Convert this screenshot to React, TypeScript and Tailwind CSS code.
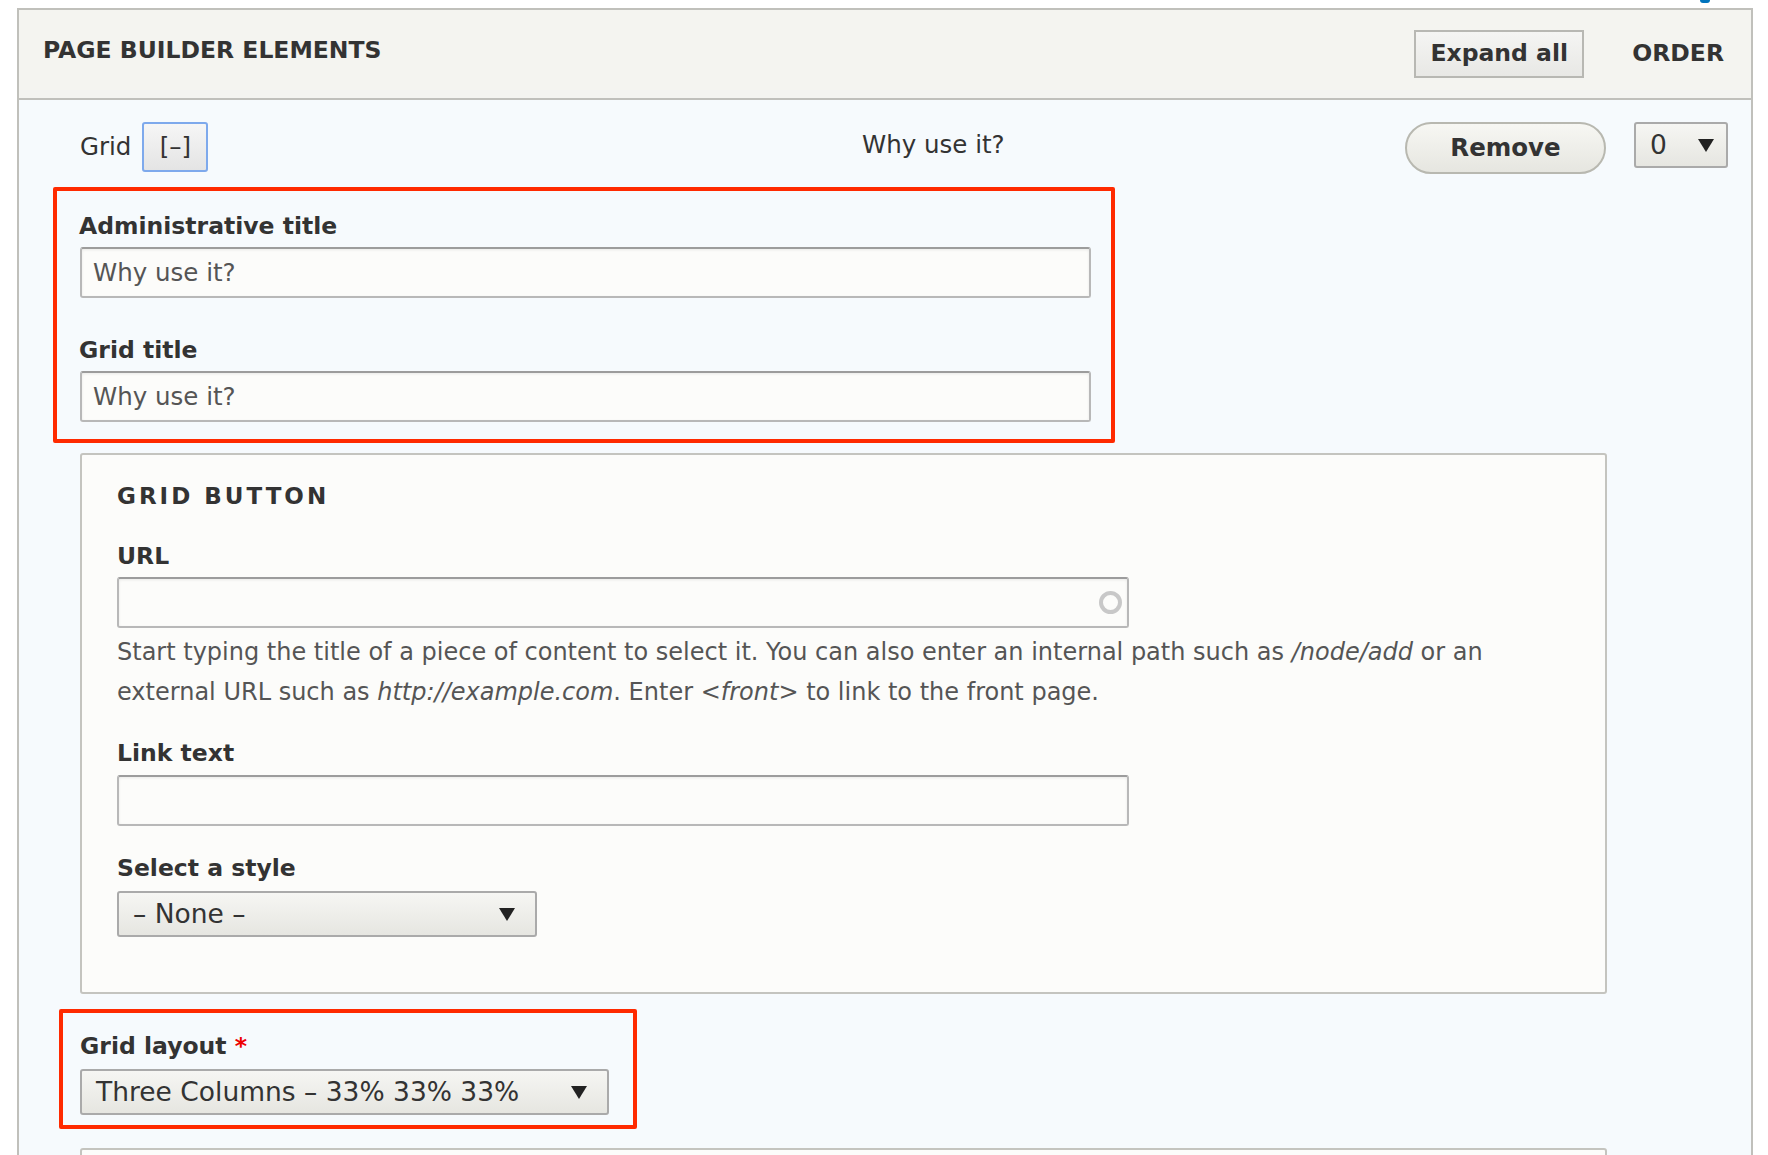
import React from "react";

const Arrow = ({ className = "" }: { className?: string }) => (
  <svg width="16" height="13" viewBox="0 0 16 13" className={className}>
    <path d="M0 0 L16 0 L8 13 Z" fill="#222" />
  </svg>
);

const TextInput = ({ value = "", width, throbber }: { value?: string; width: string; throbber?: boolean }) => (
  <div className={`relative h-[51px] ${width}`}>
    <input
      readOnly
      value={value}
      className="h-full w-full rounded-[3px] border-2 border-[#b8b8b8] border-t-[#9c9c9c] bg-[#fcfcfa] px-[11px] font-['DejaVu_Sans',sans-serif] text-[24.5px] text-[#555] shadow-[inset_0_1px_3px_rgba(0,0,0,0.08)] outline-none"
    />
    {throbber && (
      <div className="absolute right-[7px] top-[14px] h-[23px] w-[23px] rounded-full border-4 border-[#c8c8c8]" />
    )}
  </div>
);

const Select = ({ value, width }: { value: string; width: string }) => (
  <div
    className={`flex h-[46px] ${width} items-center justify-between rounded-[3px] border-2 border-[#aaa] bg-gradient-to-b from-[#f6f6f3] to-[#e6e6e1] pl-[14px] pr-[20px] text-[26.5px] text-[#333]`}
  >
    <span>{value}</span>
    <Arrow />
  </div>
);

const Label = ({ children, className = "" }: { children: React.ReactNode; className?: string }) => (
  <div className={`text-[23.5px] font-bold leading-[30px] text-[#333] ${className}`}>{children}</div>
);

export default function App() {
  return (
    <div className="h-[1155px] w-[1768px] overflow-hidden bg-white font-['DejaVu_Sans',sans-serif] text-[#333]">
      {/* bit of the link above the panel */}
      <div className="flex h-[8px] justify-end pr-[58px]">
        <div className="h-[3px] w-[10px] rounded-b-full bg-[#0074bd]" />
      </div>

      <div className="ml-[17px] w-[1736px] border-2 border-[#c0c0bb]">
        {/* header */}
        <div className="flex h-[90px] items-start justify-between border-b-2 border-[#c0c0bb] bg-[#f4f4f0] pl-[24px] pr-[27px]">
          <div className="mt-[25px] text-[23.5px] font-bold leading-[30px] text-[#333]">PAGE BUILDER ELEMENTS</div>
          <div className="mt-[20px] flex items-center gap-[48px]">
            <button className="h-[48px] w-[170px] border-2 border-[#b8b8b3] bg-gradient-to-b from-[#f5f5f3] to-[#e8e8e5] text-[23.5px] font-bold text-[#333]">
              Expand all
            </button>
            <div className="text-[23.5px] font-bold text-[#333]">ORDER</div>
          </div>
        </div>

        {/* body */}
        <div className="h-[1060px] bg-[#f6fafd] pl-[61px] pt-[22px]">
          {/* row */}
          <div className="flex items-start">
            <div className="flex w-[782px] items-center gap-[11px]">
              <span className="text-[24.5px]">Grid</span>
              <button className="flex h-[50px] w-[66px] items-center justify-center rounded-[3px] border-2 border-[#7ea9ec] bg-gradient-to-b from-[#f6f6f6] to-[#e4e4e4] text-[24.5px] text-[#333]">
                [–]
              </button>
            </div>
            <div className="w-[543px] pt-[5px] text-[24.5px] text-[#333]">Why use it?</div>
            <button className="h-[52px] w-[201px] rounded-full border-2 border-[#b8b8b0] bg-gradient-to-b from-[#f7f7f3] to-[#e6e6e0] text-[24.5px] font-bold text-[#333]">
              Remove
            </button>
            <div className="ml-[28px] flex h-[46px] w-[94px] items-center justify-between rounded-[3px] border-2 border-[#aaa] bg-gradient-to-b from-[#f6f6f3] to-[#e6e6e1] pl-[14px] pr-[12px] text-[26.5px]">
              <span>0</span>
              <Arrow />
            </div>
          </div>

          {/* highlighted titles */}
          <div className="-ml-[27px] mt-[13px] w-[1062px] rounded-[2px] border-4 border-[#ff2a00] pb-[17px] pl-[23px] pr-[20px] pt-[20px]">
            <Label className="-ml-[1px]">Administrative title</Label>
            <div className="mt-[6px]">
              <TextInput value="Why use it?" width="w-[1011px]" />
            </div>
            <Label className="-ml-[1px] mt-[37px]">Grid title</Label>
            <div className="mt-[6px]">
              <TextInput value="Why use it?" width="w-[1011px]" />
            </div>
          </div>

          {/* grid button fieldset */}
          <div className="mt-[10px] w-[1527px] rounded-[3px] border-2 border-[#c4c4bf] bg-[#fcfcfa] pb-[55px] pl-[35px] pt-[26px]">
            <div className="text-[23px] font-bold uppercase leading-[30px] tracking-[3px] text-[#333]">Grid button</div>
            <Label className="mt-[30px]">URL</Label>
            <div className="mt-[6px]">
              <TextInput width="w-[1012px]" throbber />
            </div>
            <div className="mt-[4px] text-[24px] leading-[40px] text-[#555]">
              Start typing the title of a piece of content to select it. You can also enter an internal path such as{" "}
              <em>/node/add</em> or an
              <br />
              external URL such as <em>http://example.com</em>. Enter <em>&lt;front&gt;</em> to link to the front page.
            </div>
            <Label className="mt-[26px]">Link text</Label>
            <div className="mt-[7px]">
              <TextInput width="w-[1012px]" />
            </div>
            <Label className="mt-[27px]">Select a style</Label>
            <div className="mt-[8px]">
              <Select value="– None –" width="w-[420px]" />
            </div>
          </div>

          {/* highlighted layout */}
          <div className="-ml-[21px] mt-[15px] w-[578px] rounded-[2px] border-4 border-[#ff2a00] pb-[10px] pl-[17px] pt-[18px]">
            <Label>
              Grid layout <span className="text-[#e00]">*</span>
            </Label>
            <div className="mt-[8px]">
              <Select value="Three Columns – 33% 33% 33%" width="w-[529px]" />
            </div>
          </div>

          {/* next element */}
          <div className="mt-[19px] h-[40px] w-[1527px] rounded-[3px] border-2 border-[#c4c4bf] bg-[#fcfcfa]" />
        </div>
      </div>
    </div>
  );
}
